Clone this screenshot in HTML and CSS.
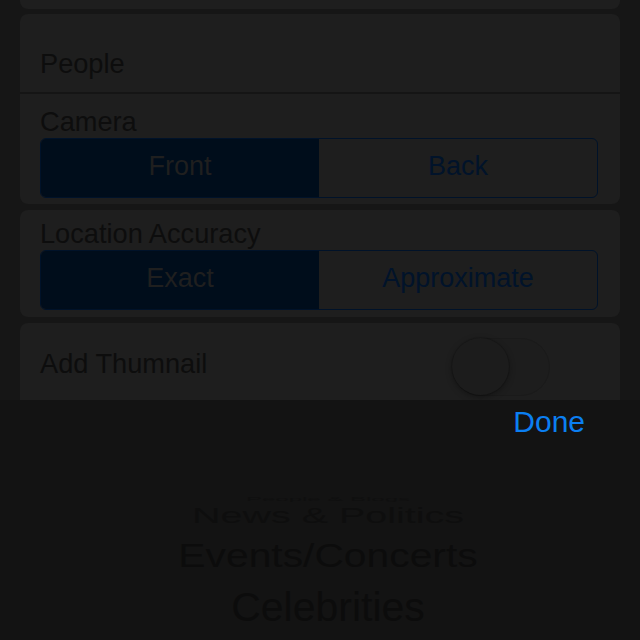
FILE: index.html
```html
<!DOCTYPE html>
<html lang="en">
<head>
<meta charset="utf-8">
<title>Settings</title>
<link rel="stylesheet" href="styles.css">
</head>
<body>
<div class="screen">
  <div class="form">
    <div class="card card-stub"></div>
    <div class="card">
      <div class="row row-people"><span class="label">People</span></div>
      <div class="separator"></div>
      <div class="row row-field">
        <div class="label">Camera</div>
        <div class="segmented">
          <div class="seg seg-on">Front</div>
          <div class="seg">Back</div>
        </div>
      </div>
    </div>
    <div class="card">
      <div class="row row-field row-loc">
        <div class="label">Location Accuracy</div>
        <div class="segmented">
          <div class="seg seg-on">Exact</div>
          <div class="seg">Approximate</div>
        </div>
      </div>
    </div>
    <div class="card card-last">
      <div class="row row-toggle">
        <span class="label label-toggle">Add Thumnail</span>
        <div class="switch"><div class="knob"></div></div>
      </div>
    </div>
  </div>
  <div class="picker">
    <div class="toolbar"><span class="done">Done</span></div>
    <div class="wheel">
      <div class="item item-far">People &amp; Blogs</div>
      <div class="item item-near">News &amp; Politics</div>
      <div class="item item-mid">Events/Concerts</div>
      <div class="item item-center">Celebrities</div>
    </div>
  </div>
</div>
</body>
</html>
```

FILE: styles.css
```css
html, body {
  margin: 0;
  padding: 0;
}
body {
  background: #161616;
  font-family: "Liberation Sans", Arial, sans-serif;
  width: 640px;
  height: 640px;
  overflow: hidden;
}
.screen {
  display: flex;
  flex-direction: column;
  width: 640px;
  height: 640px;
}
.form {
  height: 400px;
  overflow: hidden;
  padding: 0 20px;
  display: flex;
  flex-direction: column;
  gap: 6px;
  background: #161616;
}
.card {
  background: #1e1e1e;
  border-radius: 8px;
  flex: none;
}
.card-stub {
  height: 9px;
  border-radius: 0 0 8px 8px;
  margin-bottom: -1px;
}
.card-last {
  height: 120px;
}
.row {
  padding: 0 22px 0 20px;
}
.label {
  font-size: 27.2px;
  line-height: 32px;
  color: #0d0d0d;
}
.row-people {
  padding-top: 34px;
  padding-bottom: 12px;
}
.separator {
  height: 2px;
  background: #151515;
}
.row-field {
  padding-top: 12px;
  padding-bottom: 6px;
}
.row-loc {
  padding-top: 8px;
  padding-bottom: 7px;
}
.segmented {
  display: flex;
  height: 60px;
  box-sizing: border-box;
  border: 1.5px solid #001229;
  border-radius: 6px;
  overflow: hidden;
}
.seg {
  flex: 1;
  display: flex;
  align-items: center;
  justify-content: center;
  font-size: 27px;
  color: #01132a;
  padding-bottom: 4px;
  box-sizing: border-box;
}
.seg-on {
  background: #000d1b;
  color: #1f1f1f;
}
.row-toggle {
  display: flex;
  align-items: center;
  justify-content: space-between;
  padding-top: 15px;
  padding-right: 70px;
}
.label-toggle {
  margin-bottom: 6px;
}
.switch {
  position: relative;
  width: 98px;
  height: 58px;
  box-sizing: border-box;
  border: 1.5px solid #1a1a1a;
  border-radius: 29px;
  background: #1d1d1d;
}
.knob {
  position: absolute;
  left: -1px;
  top: -1px;
  width: 57px;
  height: 57px;
  border-radius: 50%;
  background: #1c1c1c;
  box-shadow: 0 2px 6px rgba(0, 0, 0, 0.35), 0 0 0 1px rgba(0, 0, 0, 0.12);
}
.picker {
  flex: 1;
  background: #131313;
  display: flex;
  flex-direction: column;
}
.toolbar {
  height: 44px;
  display: flex;
  align-items: center;
  justify-content: flex-end;
  padding-right: 55px;
}
.done {
  font-size: 30px;
  line-height: 32px;
  color: #0b7ff2;
}
.wheel {
  padding-top: 50px;
  padding-left: 16px;
  display: flex;
  flex-direction: column;
  align-items: center;
  color: #0c0c0c;
}
.item {
  white-space: nowrap;
}
.item-far {
  height: 10px;
  line-height: 10px;
  font-size: 24px;
  transform: scaleY(0.23);
  color: #0f0f0f;
}
.item-near {
  height: 23px;
  line-height: 23px;
  font-size: 39.5px;
  transform: scaleY(0.55);
  color: #0e0e0e;
}
.item-mid {
  height: 56px;
  line-height: 56px;
  font-size: 40.8px;
  transform: scaleY(0.83);
}
.item-center {
  height: 49px;
  line-height: 49px;
  font-size: 41px;
}
```
